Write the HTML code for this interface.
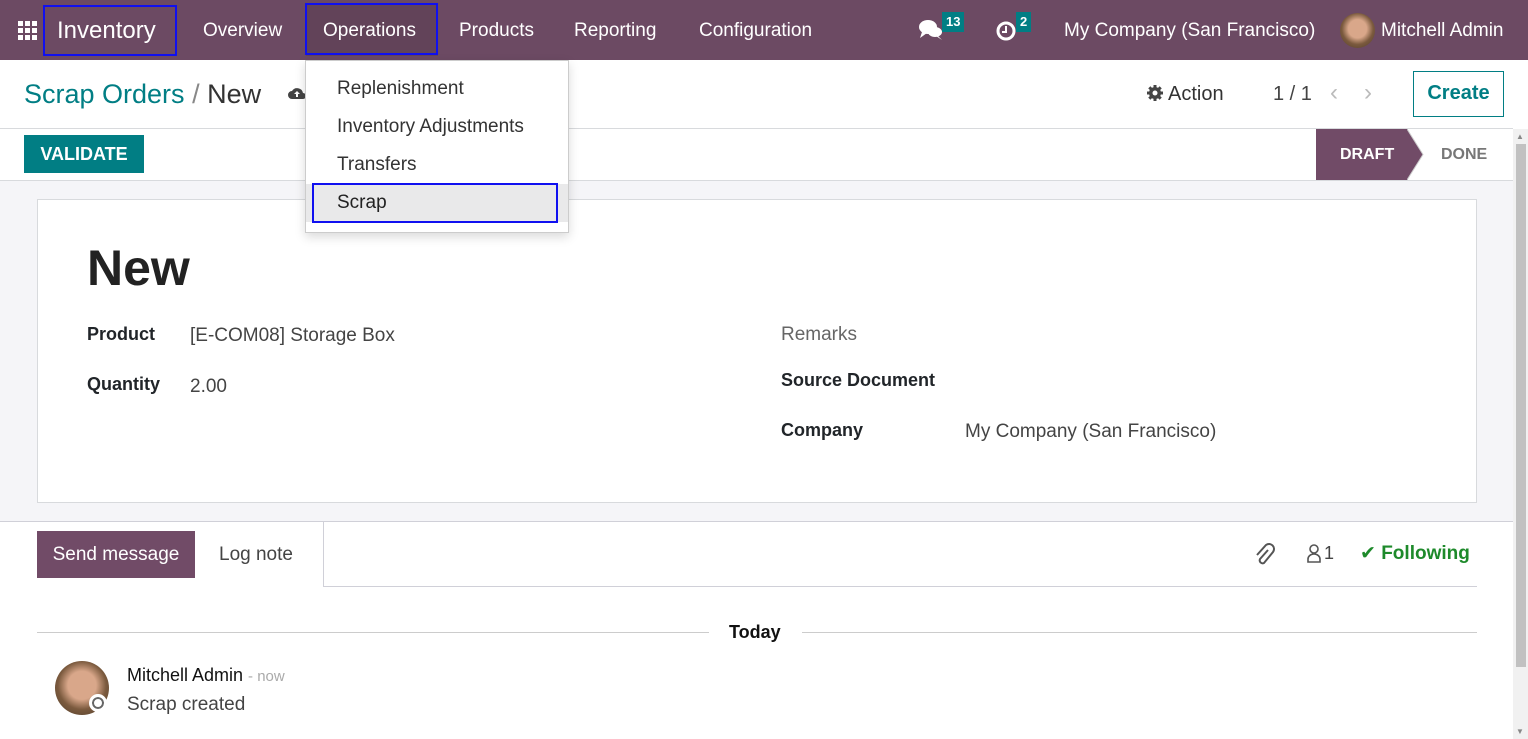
<!DOCTYPE html>
<html><head><meta charset="utf-8"><style>
*{box-sizing:border-box;margin:0;padding:0}
body{width:1528px;height:739px;overflow:hidden;font-family:"Liberation Sans","DejaVu Sans",sans-serif;background:#fff;position:relative;color:#212529}
.abs{position:absolute}
.nav{left:0;top:0;width:1528px;height:60px;background:#6c4a63;color:#fff}
.nav .t{position:absolute;top:20px;font-size:19px;color:#fff;white-space:nowrap}
.hl{position:absolute;border:2px solid #1010f0}
.badge{position:absolute;background:#017e84;color:#fff;font-size:13px;font-weight:bold;padding:1px 4px;height:20px;line-height:18px}
</style></head><body>
<div class="abs nav">
  <svg class="abs" style="left:18px;top:21px" width="20" height="20" viewBox="0 0 20 20" fill="#fff">
    <rect x="0" y="0" width="5" height="5"/><rect x="7" y="0" width="5" height="5"/><rect x="14" y="0" width="5" height="5"/>
    <rect x="0" y="7" width="5" height="5"/><rect x="7" y="7" width="5" height="5"/><rect x="14" y="7" width="5" height="5"/>
    <rect x="0" y="14" width="5" height="5"/><rect x="7" y="14" width="5" height="5"/><rect x="14" y="14" width="5" height="5"/>
  </svg>
  <div class="hl" style="left:43px;top:5px;width:134px;height:51px"></div>
  <div class="t" style="left:57px;top:17px;font-size:24px">Inventory</div>
  <div class="t" style="left:203px">Overview</div>
  <div style="position:absolute;left:306px;top:3px;width:132px;height:53px;background:#624359"></div>
  <div class="hl" style="left:305px;top:3px;width:133px;height:52px"></div>
  <div class="t" style="left:323px">Operations</div>
  <div class="t" style="left:459px">Products</div>
  <div class="t" style="left:574px">Reporting</div>
  <div class="t" style="left:699px">Configuration</div>
  <svg class="abs" style="left:918px;top:19px" width="26" height="22" viewBox="0 0 26 22" fill="#fff"><ellipse cx="10" cy="8" rx="9" ry="7"/><path d="M4 13 L2 19 L9 14Z"/><ellipse cx="17" cy="13" rx="7" ry="5"/><path d="M20 17 L24 21 L18 17Z"/></svg>
  <div class="badge" style="left:942px;top:12px">13</div>
  <svg class="abs" style="left:995px;top:20px" width="22" height="22" viewBox="0 0 22 22"><circle cx="11" cy="11" r="8" fill="none" stroke="#fff" stroke-width="3"/><path d="M11 6v6h-4" stroke="#fff" stroke-width="2" fill="none"/></svg>
  <div class="badge" style="left:1016px;top:12px">2</div>
  <div class="t" style="left:1064px">My Company (San Francisco)</div>
  <div class="abs" style="left:1340px;top:13px;width:35px;height:35px;border-radius:50%;background:radial-gradient(circle at 50% 45%,#d9a78a 0 35%,#7b5a3e 60%,#4b3a2a)"></div>
  <div class="t" style="left:1381px">Mitchell Admin</div>
</div>
<div class="abs" style="left:24px;top:79px;font-size:27px;color:#017e84">Scrap Orders <span style="color:#888">/</span> <span style="color:#333">New</span></div>
<svg class="abs" style="left:288px;top:86px" width="18" height="14" viewBox="0 0 18 14"><path d="M4 13a4 4 0 0 1 0-8 6 6 0 0 1 11 2 3 3 0 0 1 0 6Z" fill="#444"/><path d="M9 5l-3 3h2v3h2V8h2z" fill="#fff"/></svg>
<svg class="abs" style="left:1146px;top:84px" width="18" height="18" viewBox="0 0 18 18"><circle cx="9" cy="9" r="6" fill="#444"/><g stroke="#444" stroke-width="3"><path d="M9 1v16M1 9h16M3.3 3.3l11.4 11.4M14.7 3.3L3.3 14.7"/></g><circle cx="9" cy="9" r="2.5" fill="#fff"/></svg>
<div class="abs" style="left:1168px;top:83px;font-size:20px;color:#333">Action</div>
<div class="abs" style="left:1273px;top:83px;font-size:20px;color:#444">1 / 1</div>
<div class="abs" style="left:1330px;top:79px;font-size:24px;color:#bbb">‹</div>
<div class="abs" style="left:1364px;top:79px;font-size:24px;color:#bbb">›</div>
<div class="abs" style="left:1413px;top:71px;width:91px;height:46px;border:1px solid #017e84;color:#017e84;font-size:20px;font-weight:bold;text-align:center;line-height:43px">Create</div>
<div class="abs" style="left:0;top:128px;width:1513px;height:1px;background:#d8dadd"></div>
<div class="abs" style="left:24px;top:135px;width:120px;height:38px;background:#017e84;color:#fff;font-weight:bold;font-size:18px;text-align:center;line-height:38px">VALIDATE</div>
<div class="abs" style="left:1316px;top:129px;width:92px;height:51px;background:#714b67;color:#fff;font-weight:bold;font-size:16px;line-height:51px;padding-left:24px">DRAFT</div>
<svg class="abs" style="left:1407px;top:129px" width="18" height="51"><path d="M0 0L16 25.5L0 51Z" fill="#714b67"/><path d="M0 0L16 25.5L0 51" fill="none" stroke="#ccc"/></svg>
<div class="abs" style="left:1441px;top:146px;font-weight:bold;font-size:16px;color:#777">DONE</div>
<div class="abs" style="left:0;top:180px;width:1513px;height:341px;background:#f5f5f8;border-top:1px solid #d8dadd"></div>
<div class="abs" style="left:37px;top:199px;width:1440px;height:304px;background:#fff;border:1px solid #d8dadd"></div>
<div class="abs" style="left:87px;top:239px;font-size:50px;font-weight:bold;color:#222">New</div>
<div class="abs" style="left:87px;top:324px;font-size:18px;font-weight:bold">Product</div>
<div class="abs" style="left:190px;top:325px;font-size:19px;color:#444">[E-COM08] Storage Box</div>
<div class="abs" style="left:87px;top:374px;font-size:18px;font-weight:bold">Quantity</div>
<div class="abs" style="left:190px;top:376px;font-size:19px;color:#444">2.00</div>
<div class="abs" style="left:781px;top:324px;font-size:19px;color:#666">Remarks</div>
<div class="abs" style="left:781px;top:370px;font-size:18px;font-weight:bold">Source Document</div>
<div class="abs" style="left:781px;top:420px;font-size:18px;font-weight:bold">Company</div>
<div class="abs" style="left:965px;top:421px;font-size:19px;color:#444">My Company (San Francisco)</div>
<div class="abs" style="left:0;top:521px;width:1513px;height:1px;background:#d0d0d8"></div>
<div class="abs" style="left:37px;top:531px;width:158px;height:47px;background:#714b67;color:#fff;font-size:19px;line-height:47px;text-align:center">Send message</div>
<div class="abs" style="left:219px;top:544px;font-size:19px;color:#444">Log note</div>
<div class="abs" style="left:323px;top:522px;width:1px;height:65px;background:#d0d0d8"></div>
<div class="abs" style="left:323px;top:586px;width:1154px;height:1px;background:#d0d0d8"></div>
<svg class="abs" style="left:1253px;top:541px" width="22" height="24" viewBox="0 0 22 24"><path d="M15 9L7 18a3 3 0 0 0 4 4l9-11a5 5 0 0 0-7-7L4 14" fill="none" stroke="#555" stroke-width="2"/></svg>
<svg class="abs" style="left:1307px;top:543px" width="14" height="20" viewBox="0 0 14 20"><circle cx="7" cy="6" r="4" fill="none" stroke="#555" stroke-width="1.6"/><path d="M1 19v-3a6 5 0 0 1 12 0v3Z" fill="none" stroke="#555" stroke-width="1.6"/></svg>
<div class="abs" style="left:1324px;top:543px;font-size:18px;color:#444">1</div>
<div class="abs" style="left:1360px;top:542px;font-size:19px;color:#1e8a2b;font-weight:bold">✔ Following</div>
<div class="abs" style="left:37px;top:632px;width:672px;height:1px;background:#ccc"></div>
<div class="abs" style="left:802px;top:632px;width:675px;height:1px;background:#ccc"></div>
<div class="abs" style="left:729px;top:622px;font-size:18px;font-weight:bold;color:#111">Today</div>
<div class="abs" style="left:55px;top:661px;width:54px;height:54px;border-radius:50%;background:radial-gradient(circle at 50% 45%,#d9a78a 0 35%,#7b5a3e 60%,#4b3a2a)"></div>
<div class="abs" style="left:89px;top:694px;width:18px;height:18px;border-radius:50%;background:#fff;border:3px solid #fff;box-shadow:inset 0 0 0 2px #666"></div>
<div class="abs" style="left:127px;top:665px;font-size:18px;color:#111">Mitchell Admin <span style="font-size:15px;color:#aaa">- now</span></div>
<div class="abs" style="left:127px;top:694px;font-size:19px;color:#444">Scrap created</div>
<div class="abs" style="left:1513px;top:129px;width:15px;height:610px;background:#f1f1f1"></div>
<div class="abs" style="left:1516px;top:144px;width:10px;height:523px;background:#c1c1c1"></div>
<div class="abs" style="left:1516px;top:132px;font-size:8px;color:#888">▲</div>
<div class="abs" style="left:1516px;top:727px;font-size:8px;color:#888">▼</div>
<div class="abs" style="left:305px;top:60px;width:264px;height:173px;background:#fff;border:1px solid #ccc;box-shadow:0 4px 10px rgba(0,0,0,.15)"></div>
<div class="abs" style="left:306px;top:184px;width:262px;height:38px;background:#e9e9ea"></div>
<div class="hl" style="left:312px;top:183px;width:246px;height:40px"></div>
<div class="abs" style="left:337px;top:78px;font-size:19px;color:#333">Replenishment</div>
<div class="abs" style="left:337px;top:116px;font-size:19px;color:#333">Inventory Adjustments</div>
<div class="abs" style="left:337px;top:154px;font-size:19px;color:#333">Transfers</div>
<div class="abs" style="left:337px;top:192px;font-size:19px;color:#222">Scrap</div>
</body></html>
